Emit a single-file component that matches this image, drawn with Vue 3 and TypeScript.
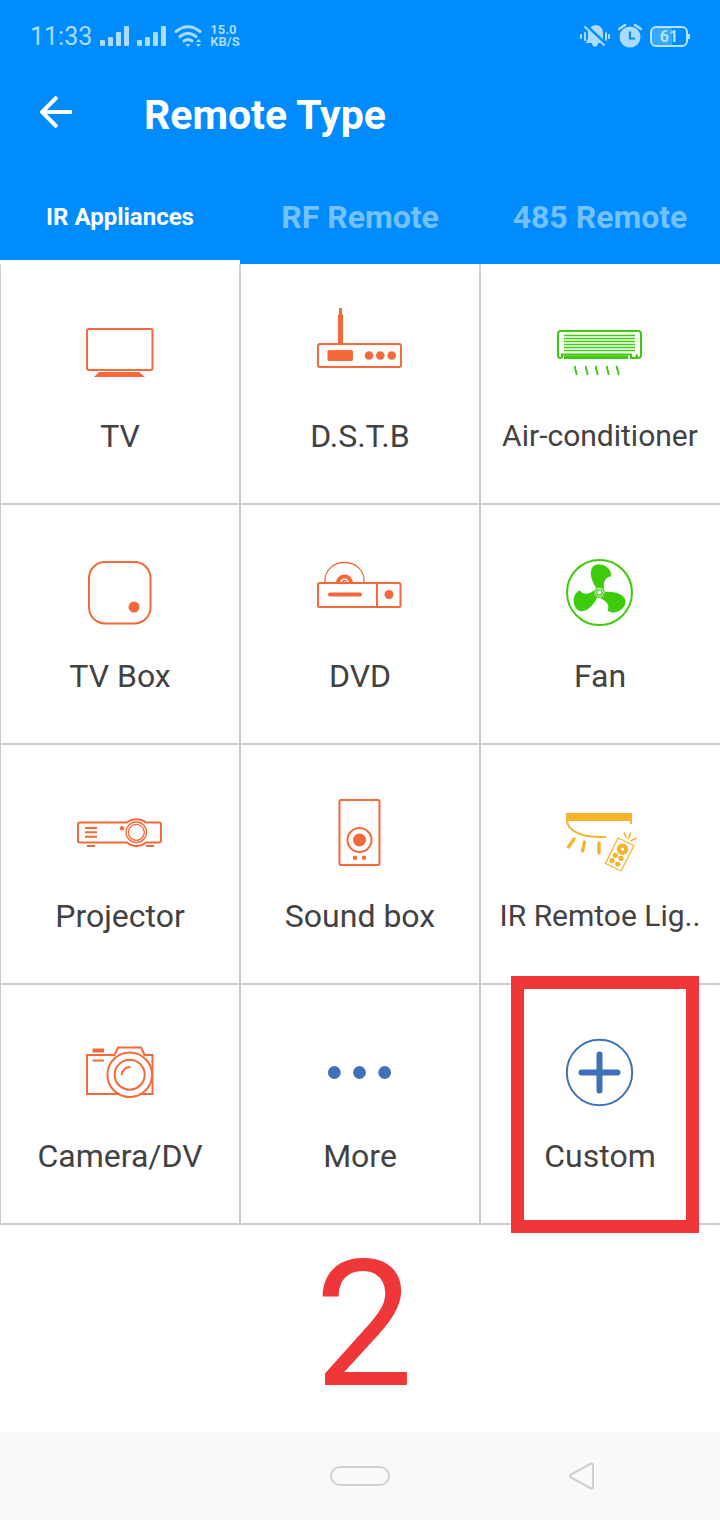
<script setup lang="ts">
import { ref } from 'vue'

interface Appliance {
  id: string
  label: string
  tone: 'orange' | 'green' | 'amber' | 'blue'
  compact?: boolean
}

const tabs = ['IR Appliances', 'RF Remote', '485 Remote']
const activeTab = ref(0)

const appliances: Appliance[] = [
  { id: 'tv', label: 'TV', tone: 'orange' },
  { id: 'dstb', label: 'D.S.T.B', tone: 'orange' },
  { id: 'ac', label: 'Air-conditioner', tone: 'green', compact: true },
  { id: 'tvbox', label: 'TV Box', tone: 'orange' },
  { id: 'dvd', label: 'DVD', tone: 'orange' },
  { id: 'fan', label: 'Fan', tone: 'green' },
  { id: 'projector', label: 'Projector', tone: 'orange' },
  { id: 'sound', label: 'Sound box', tone: 'orange' },
  { id: 'light', label: 'IR Remtoe Lig..', tone: 'amber', compact: true },
  { id: 'camera', label: 'Camera/DV', tone: 'orange' },
  { id: 'more', label: 'More', tone: 'blue' },
  { id: 'custom', label: 'Custom', tone: 'blue' },
]

const wisps = [24, 35, 45, 56, 66]
const vents = [31.5, 34.5, 37.5, 40.5, 43.5, 46.5]
</script>

<template>
  <div class="screen">
    <header class="header">
      <div class="status">
        <div class="status-group">
          <span class="clock">11:33</span>
          <svg class="signals" viewBox="0 0 66 20" aria-hidden="true">
            <g fill="currentColor">
              <rect x="0" y="14" width="5" height="6" rx="1" />
              <rect x="8" y="11" width="5" height="9" rx="1" />
              <rect x="16" y="6" width="5" height="14" rx="1" />
              <rect x="24" y="0" width="5" height="20" rx="1" />
              <rect x="37" y="14" width="5" height="6" rx="1" />
              <rect x="45" y="11" width="5" height="9" rx="1" />
              <rect x="53" y="6" width="5" height="14" rx="1" />
              <rect x="61" y="0" width="5" height="20" rx="1" />
            </g>
          </svg>
          <svg class="wifi" viewBox="0 0 28 22" aria-hidden="true">
            <g fill="none" stroke="currentColor" stroke-width="3" stroke-linecap="round">
              <path d="M2 6.500Q14 -3 26 6.500" />
              <path d="M6 11.500Q14 5 22 11.500" />
              <path d="M10 16Q14 13 18 16" />
            </g>
            <path fill="currentColor" d="M11.500 19h5L14 22zM22 17l2.500-3 2.500 3zM22 19h5l-2.500 3z" />
          </svg>
          <span class="speed"><span>15.0</span><span>KB/S</span></span>
        </div>
        <div class="status-group">
          <svg class="bell" viewBox="0 0 30 24" aria-hidden="true">
            <path fill="currentColor" d="M6 19V18L8 15V9C8 5 11 2 15 1C20 1 23 4 23 9V15L25 18V19H18C18 24 12 24 12 19Z" />
            <path d="M5 1L26 21" stroke="#008cff" stroke-width="4" />
            <g stroke="currentColor" stroke-width="2" stroke-linecap="round">
              <path d="M5 3L24 21" />
              <path d="M1 11v3M5 9v7M26 9v7M29 11v3" />
            </g>
          </svg>
          <svg class="alarm" viewBox="0 0 24 24" aria-hidden="true">
            <circle cx="12" cy="13" r="10.500" fill="currentColor" />
            <path d="M1 5L7 1M17 1L23 5" stroke="currentColor" stroke-width="2.500" stroke-linecap="round" />
            <path d="M12 7.500v7h5" fill="none" stroke="#008cff" stroke-width="2.200" />
          </svg>
          <span class="battery">61</span>
        </div>
      </div>

      <div class="title-bar">
        <button class="back" type="button" aria-label="Back">
          <svg viewBox="0 0 32 32" aria-hidden="true">
            <path d="M17 1L2 16L17 31M2 16H32" fill="none" stroke="#fff" stroke-width="4" />
          </svg>
        </button>
        <h1>Remote Type</h1>
      </div>

      <nav class="tabs">
        <button
          v-for="(tab, i) in tabs"
          :key="tab"
          type="button"
          class="tab"
          :class="{ active: activeTab === i }"
          @click="activeTab = i"
        >
          {{ tab }}
        </button>
      </nav>
    </header>

    <main class="content">
      <div class="grid">
        <div v-for="item in appliances" :key="item.id" class="cell">
          <button type="button" class="tile">
            <svg class="icon" :class="item.tone" viewBox="0 0 96 96" aria-hidden="true">
              <g v-if="item.id === 'tv'">
                <rect class="line" x="15" y="25" width="65.500" height="41" rx="2" />
                <path class="solid" d="M27 68H67L73 73H22Z" />
              </g>
              <g v-else-if="item.id === 'dstb'">
                <rect class="line" x="6" y="40" width="83" height="23" rx="2" />
                <path class="solid" d="M26 39V11L27 10V4H30V10L31 11V39Z" />
                <rect class="solid" x="15.500" y="46" width="25.500" height="11" rx="1.500" />
                <circle class="solid" cx="57" cy="51.500" r="4.300" />
                <circle class="solid" cx="68.300" cy="51.500" r="4.300" />
                <circle class="solid" cx="79.700" cy="51.500" r="4.300" />
              </g>
              <g v-else-if="item.id === 'ac'">
                <path class="line" d="M9.500 54H8Q6 54 6 51V30Q6 27 9 27H86Q89 27 89 30V51Q89 54 86 54H79V50.500H10V54" />
                <path v-for="y in vents" :key="y" class="hair" :d="`M12 ${y}H83`" />
                <rect class="solid" x="12" y="51.500" width="64" height="3.500" />
                <rect class="solid" x="83.500" y="50.500" width="2.500" height="2.500" />
                <path
                  v-for="x in wisps"
                  :key="x"
                  class="wisp"
                  :d="`M${x - 1} 62C${x - 2} 66 ${x + 1} 66 ${x + 0.5} 71`"
                />
              </g>
              <g v-else-if="item.id === 'tvbox'">
                <rect class="line" x="17" y="18" width="61.500" height="61.500" rx="16" />
                <circle class="solid" cx="62" cy="63" r="5.500" />
              </g>
              <g v-else-if="item.id === 'dvd'">
                <rect class="line" x="6" y="39" width="82.500" height="24" rx="1.500" />
                <path class="line" d="M65 39V63" />
                <circle class="solid" cx="77" cy="50.500" r="4.500" />
                <path class="line thick" d="M18 50.500H48" />
                <path class="hair" d="M13 38C12 27 21 18.500 32.500 18.500S53 27 52 38" />
                <path class="line fat" d="M26 39A6.500 6.500 0 0 1 39 39" />
                <path class="hair" d="M30.500 38.500A2 2 0 0 1 34.500 38.500" />
              </g>
              <g v-else-if="item.id === 'fan'">
                <circle class="line" cx="47.500" cy="48.500" r="32.500" />
                <path
                  v-for="angle in [0, 120, 240]"
                  :key="angle"
                  class="solid"
                  :transform="`rotate(${angle} 47.5 48.5)`"
                  d="M44.500 44.500C40 38 37 29 40 24C42 20 47 19.500 51 21C56 23 60 27 59 32.500C54 33 51 37 52 44.500Z"
                />
                <circle cx="47.500" cy="48.500" r="5.500" fill="#fff" />
                <circle class="hair" cx="47.500" cy="48.500" r="4.800" />
                <circle class="hair" cx="47.500" cy="48.500" r="2.700" />
              </g>
              <g v-else-if="item.id === 'projector'">
                <path
                  class="line"
                  d="M55 38.500C60 34 69 34 74 38.500H87Q89 38.500 89 40.500V56.500Q89 58.500 87 58.500H74C69 63 60 63 55 58.500H8Q6 58.500 6 56.500V40.500Q6 38.500 8 38.500Z"
                />
                <circle class="hair" cx="64.300" cy="48.300" r="10.300" />
                <circle class="hair" cx="64.300" cy="48.300" r="8" />
                <path class="line" d="M13 44H25M13 48.300H25M13 52.700H25M15 62H23M74 62H82" />
                <circle class="solid" cx="50" cy="44.300" r="2.200" />
              </g>
              <g v-else-if="item.id === 'sound'">
                <rect class="line" x="27.500" y="16" width="40" height="65" rx="1.500" />
                <circle class="line" cx="47.500" cy="56" r="12" />
                <circle class="solid" cx="47.500" cy="56" r="6.500" />
                <circle class="solid" cx="43" cy="73.700" r="2.200" />
                <circle class="solid" cx="52" cy="73.700" r="2.200" />
              </g>
              <g v-else-if="item.id === 'light'">
                <path class="solid" d="M14 29H80V40H78V37H14Z" />
                <path class="line" d="M15 36C15 46 28 54 54 53" />
                <path class="line ray" d="M22 55L16.500 63M32.500 58L30.500 67M47 59V69" />
                <path class="hair" d="M66 54L82 61.500L69 87L53.500 79.500Z" />
                <circle class="line fat" cx="70.500" cy="65.300" r="3.700" />
                <circle class="solid" cx="63.300" cy="71.300" r="2.600" />
                <circle class="solid" cx="69" cy="74.300" r="2.600" />
                <circle class="solid" cx="60" cy="76.700" r="2.600" />
                <circle class="solid" cx="65.700" cy="80" r="2.600" />
                <path class="spark" d="M72 48.500L74.500 54M78.700 48.500L76.500 55M84.500 54L78.500 57" />
              </g>
              <g v-else-if="item.id === 'camera'">
                <path class="line" d="M42.500 31H15V70H48M68 70H80.500V31H72.700M42 32L46 23.500H69L73 32" />
                <circle class="line" cx="57.700" cy="50.700" r="22.300" />
                <circle class="line" cx="57.700" cy="50.700" r="15" />
                <path class="line" d="M49.500 51A8.500 8.500 0 0 1 58.500 43" />
                <rect class="solid" x="20.500" y="24.500" width="11.500" height="4" />
                <path class="line" d="M20.500 36.500H32" />
              </g>
              <g v-else-if="item.id === 'more'">
                <circle class="solid" cx="22.300" cy="48.500" r="6.400" />
                <circle class="solid" cx="47.500" cy="48.500" r="6.400" />
                <circle class="solid" cx="72.700" cy="48.500" r="6.400" />
              </g>
              <g v-else>
                <circle class="line" cx="47.500" cy="48.500" r="32.700" />
                <path d="M29.500 48.500H65.500M47.500 30.500V66.500" fill="none" stroke="currentColor" stroke-width="6" stroke-linecap="round" />
              </g>
            </svg>
            <span class="label" :class="{ compact: item.compact }">{{ item.label }}</span>
          </button>
          <span v-if="item.id === 'custom'" class="highlight"></span>
        </div>
      </div>
      <p class="step">2</p>
    </main>

    <footer class="nav-bar">
      <span></span>
      <button type="button" aria-label="Home"><span class="pill"></span></button>
      <button type="button" aria-label="Go back">
        <svg class="triangle" viewBox="0 0 28 28" aria-hidden="true">
          <path d="M2 14Q2 13 3 12.500L23 1.500Q25 1 25 3V25Q25 27 23 26.500L3 15.500Q2 15 2 14Z" fill="none" stroke="#d0d0d0" stroke-width="2" />
        </svg>
      </button>
    </footer>
  </div>
</template>

<style>
body {
  margin: 0;
  background: #fff;
}
</style>

<style scoped>
.screen {
  display: flex;
  flex-direction: column;
  min-height: 100vh;
  background: #fff;
  font-family: Roboto, "Noto Sans", sans-serif;
  color: #424242;
}

button {
  margin: 0;
  padding: 0;
  border: 0;
  background: none;
  font: inherit;
  color: inherit;
}

svg {
  display: block;
}

.header {
  background: #008cff;
  color: #fff;
}

.status {
  box-sizing: border-box;
  display: flex;
  justify-content: space-between;
  align-items: center;
  height: 72px;
  padding: 0 32px 0 30px;
  color: #a9dcff;
}

.status-group {
  display: flex;
  align-items: center;
  gap: 8px;
}

.clock {
  padding-top: 2px;
  font-size: 25px;
  line-height: 28px;
}

.signals {
  width: 66px;
  height: 20px;
}

.wifi {
  width: 28px;
  height: 22px;
}

.speed {
  display: flex;
  flex-direction: column;
  font-size: 13px;
  font-weight: 700;
  line-height: 12px;
}

.bell {
  width: 30px;
  height: 24px;
}

.alarm {
  width: 24px;
  height: 24px;
}

.battery {
  position: relative;
  box-sizing: border-box;
  width: 38px;
  height: 21px;
  border: 2px solid currentColor;
  border-radius: 6px;
  background: linear-gradient(90deg, #38a8ff 60%, transparent 60%);
  font-size: 16px;
  font-weight: 700;
  line-height: 17px;
  text-align: center;
  color: #b4e2ff;
}

.battery::after {
  content: "";
  position: absolute;
  top: 6px;
  right: -4px;
  width: 2px;
  height: 5px;
  background: currentColor;
}

.title-bar {
  display: flex;
  align-items: center;
  gap: 72px;
  height: 80px;
  padding: 0 40px;
}

.back svg {
  width: 32px;
  height: 32px;
}

h1 {
  margin: 0;
  padding-top: 6px;
  font-size: 41px;
  font-weight: 700;
  line-height: 48px;
}

.tabs {
  display: grid;
  grid-template-columns: repeat(3, 1fr);
  height: 112px;
}

.tab {
  padding-top: 22px;
  border-bottom: 4px solid transparent;
  font-size: 32px;
  font-weight: 700;
  line-height: 40px;
  color: #73c1ff;
}

.tab.active {
  border-bottom-color: #fff;
  font-size: 24px;
  color: #fff;
}

.content {
  flex: 1;
}

.grid {
  display: grid;
  grid-template-columns: repeat(3, 1fr);
  border-bottom: 1px solid #ccc;
}

.cell {
  position: relative;
  box-sizing: border-box;
  height: 240px;
  border: 1px solid #ccc;
}

.cell:nth-child(3n) {
  border-right-color: transparent;
}

.cell:nth-child(-n + 3) {
  border-top-color: transparent;
}

.tile {
  display: flex;
  flex-direction: column;
  align-items: center;
  gap: 16px;
  width: 100%;
  height: 100%;
  padding-top: 39px;
}

.icon {
  width: 96px;
  height: 96px;
}

.orange {
  color: #f4693a;
}

.green {
  color: #3dcb0c;
}

.amber {
  color: #f5b32b;
}

.blue {
  color: #416fb8;
}

.solid {
  fill: currentColor;
}

.line,
.hair,
.spark,
.wisp {
  fill: none;
  stroke: currentColor;
  stroke-width: 2;
}

.hair {
  stroke-width: 1.3;
}

.spark {
  stroke-width: 1.6;
}

.line.fat {
  stroke-width: 4;
}

.line.thick {
  stroke-width: 4;
  stroke-linecap: round;
}

.line.ray {
  stroke-width: 3.4;
  stroke-linecap: round;
}

.label {
  font-size: 32px;
  line-height: 40px;
  white-space: nowrap;
}

.label.compact {
  font-size: 30px;
}

.highlight {
  position: absolute;
  inset: -9px 20px -10px 30px;
  border: 13px solid #ef3638;
  pointer-events: none;
}

.step {
  margin: 0;
  padding: 0 0 0 8px;
  font-size: 176px;
  line-height: 200px;
  text-align: center;
  color: #ef3638;
}

.nav-bar {
  display: grid;
  grid-template-columns: repeat(3, 1fr);
  height: 88px;
  padding: 0 27px;
  background: #f9f9f9;
}

.nav-bar button {
  display: flex;
  justify-content: center;
  align-items: center;
}

.pill {
  box-sizing: border-box;
  width: 60px;
  height: 20px;
  border: 2px solid #d0d0d0;
  border-radius: 10px;
}

.triangle {
  width: 28px;
  height: 28px;
}
</style>
